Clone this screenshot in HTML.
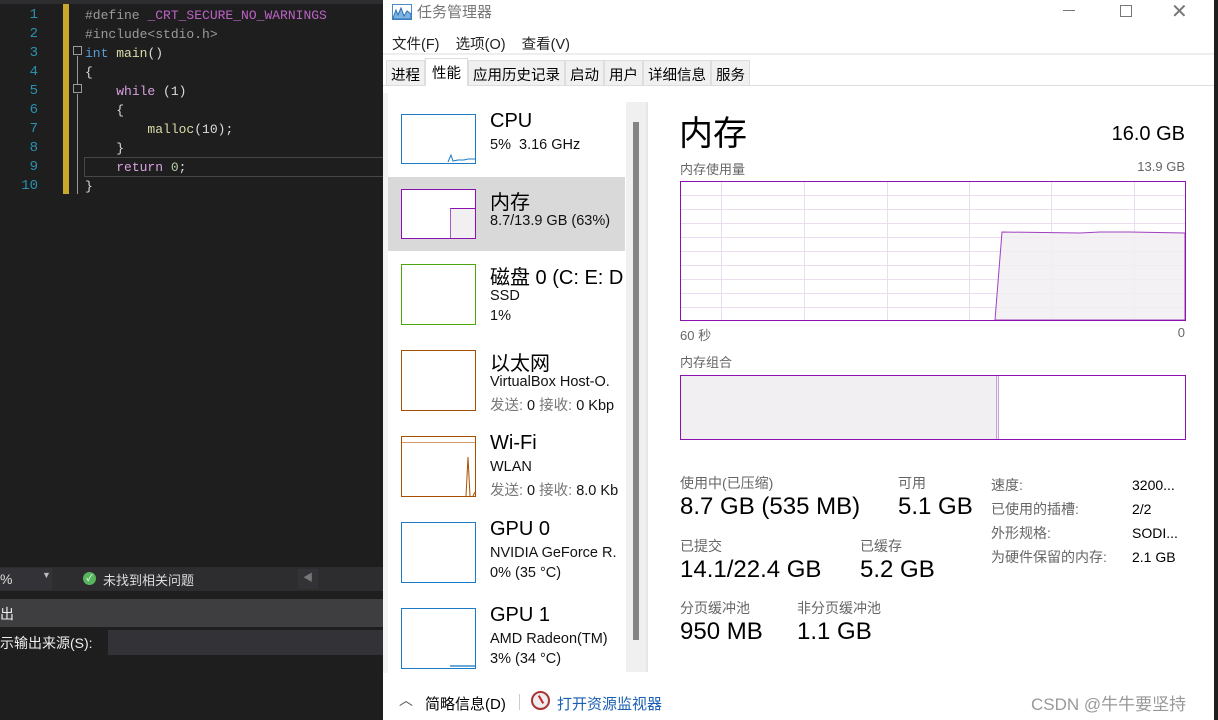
<!DOCTYPE html>
<html><head><meta charset="utf-8"><style>
*{margin:0;padding:0;box-sizing:border-box}
body{width:1218px;height:720px;overflow:hidden;background:#1e1e1e;position:relative;font-family:"Liberation Sans","Noto Sans CJK SC",sans-serif}
.a{position:absolute;white-space:nowrap}
.code{font-family:"Liberation Mono","Noto Sans CJK SC",monospace;font-size:13px;color:#dcdcdc}
.ln{color:#2b91af;font-family:"Liberation Mono",monospace;font-size:14px;width:38px;text-align:right}
.tm{position:absolute;left:383px;top:0;width:831px;height:720px;background:#fff}
.th{position:absolute;left:18px;width:75px;background:#fff}
.t1{font-size:20px;color:#000}
.t2{font-size:14.5px;color:#111}
.g{color:#777}
.lab{font-size:14px;color:#666}
.val{font-size:24px;color:#000}
</style></head><body>
<!-- VS editor -->
<div class="a" style="left:63px;top:4px;width:6px;height:190px;background:#c8a82a"></div>
<div class="a" style="left:0;top:0;width:383px;height:4px;background:#2d2d30"></div>
<div class="a" style="left:84px;top:157px;width:299px;height:20px;border:1px solid #464646;border-right:none"></div>
<div class="a ln" style="left:0;top:6px;line-height:19px">1<br>2<br>3<br>4<br>5<br>6<br>7<br>8<br>9<br>10</div>
<div class="a" style="left:73px;top:46px;width:9px;height:9px;border:1px solid #999"></div>
<div class="a" style="left:73px;top:84px;width:9px;height:9px;border:1px solid #999"></div>
<div class="a" style="left:77px;top:56px;width:1px;height:28px;background:#999"></div>
<div class="a" style="left:77px;top:94px;width:1px;height:100px;background:#999"></div>
<div class="a code" style="left:85px;top:6px;line-height:19px">
<span style="color:#9b9b9b">#define</span> <span style="color:#bd63c5">_CRT_SECURE_NO_WARNINGS</span><br>
<span style="color:#9b9b9b">#include&lt;stdio.h&gt;</span><br>
<span style="color:#569cd6">int</span> <span style="color:#dcdcaa">main</span>()<br>
{<br>
&nbsp;&nbsp;&nbsp;&nbsp;<span style="color:#d8a0df">while</span> (1)<br>
&nbsp;&nbsp;&nbsp;&nbsp;{<br>
&nbsp;&nbsp;&nbsp;&nbsp;&nbsp;&nbsp;&nbsp;&nbsp;<span style="color:#dcdcaa">malloc</span>(10);<br>
&nbsp;&nbsp;&nbsp;&nbsp;}<br>
&nbsp;&nbsp;&nbsp;&nbsp;<span style="color:#d8a0df">return</span> <span style="color:#b5cea8">0</span>;<br>
}</div>
<!-- status -->
<div class="a" style="left:0;top:567px;width:383px;height:24px;background:#2d2d30"></div>
<div class="a" style="left:0;top:568px;width:52px;height:22px;background:#333337;color:#ddd;font-size:14px;padding:3px 0">%<span style="position:absolute;left:42px;top:2px;font-size:9px;color:#bbb">▼</span></div>
<div class="a" style="left:83px;top:572px;width:13px;height:13px;border-radius:50%;background:#57b55d;color:#fff;font-size:9px;text-align:center;line-height:13px">✓</div>
<div class="a" style="left:103px;top:570px;color:#ddd;font-size:13px">未找到相关问题</div>
<div class="a" style="left:298px;top:569px;width:20px;height:20px;background:#333337;color:#777;font-size:10px;text-align:center;line-height:20px">◀</div>
<div class="a" style="left:0;top:599px;width:383px;height:28px;background:#3e3e40;color:#eee;font-size:14px;padding-top:5px">出</div>
<div class="a" style="left:0;top:633px;color:#eee;font-size:14px">示输出来源(S):</div>
<div class="a" style="left:108px;top:630px;width:275px;height:25px;background:#333337"></div>
<!-- Task manager -->
<div class="tm">
 <svg class="a" style="left:9px;top:4px" width="20" height="16" viewBox="0 0 20 16"><rect x="0.5" y="0.5" width="19" height="15" fill="#fff" stroke="#4a8ac8"/><path d="M1 14 L4 6 L6 11 L9 4 L12 12 L15 7 L19 10 L19 15 L1 15Z" fill="#7fb3e0" stroke="#2a6fb5"/></svg>
 <div class="a" style="left:34px;top:1px;font-size:15px;color:#777">任务管理器</div>
 <div class="a" style="left:680px;top:10px;width:12px;height:1px;background:#777"></div>
 <div class="a" style="left:737px;top:5px;width:12px;height:12px;border:1px solid #777"></div>
 <div class="a" style="left:788px;top:-1px;font-size:20px;color:#777">✕</div>
 <div class="a" style="left:9px;top:33px;font-size:14.5px;color:#222">文件(F)&nbsp;&nbsp;&nbsp; 选项(O)&nbsp;&nbsp;&nbsp; 查看(V)</div>
 <div class="a" style="left:0;top:53px;width:831px;height:2px;background:#eee"></div>
 <div class="a" style="left:0;top:85px;width:831px;height:1px;background:#ddd"></div>
 <div class="a" style="left:3px;top:60px;height:26px;font-size:14.5px;color:#000;display:flex">
  <div style="background:#f0f0f0;border:1px solid #ddd;padding:3px 4px">进程</div>
  <div style="background:#fff;border:1px solid #ddd;border-bottom:none;padding:3px 6px;margin-top:-2px;height:28px">性能</div>
  <div style="background:#f0f0f0;border:1px solid #ddd;padding:3px 4px">应用历史记录</div>
  <div style="background:#f0f0f0;border:1px solid #ddd;padding:3px 4px">启动</div>
  <div style="background:#f0f0f0;border:1px solid #ddd;padding:3px 4px">用户</div>
  <div style="background:#f0f0f0;border:1px solid #ddd;padding:3px 4px">详细信息</div>
  <div style="background:#f0f0f0;border:1px solid #ddd;padding:3px 4px">服务</div>
 </div>
 <div class="a" style="left:0;top:93px;width:5px;height:580px;background:#f4f4f4"></div>
 <div class="a" style="left:5px;top:177px;width:237px;height:74px;background:#d9d9d9"></div>
 <div class="a" style="left:243px;top:102px;width:20px;height:570px;background:#f0f0f0"></div>
 <div class="a" style="left:250px;top:122px;width:6px;height:518px;background:#858585"></div>
 <div class="a" style="left:263px;top:102px;width:2px;height:570px;background:#e6e6e6"></div>

 <div class="a" style="left:0;top:100px;width:242px;height:580px;overflow:hidden">
 <div class="th a" style="top:14px;height:50px;border:1px solid #1c7bc4"><svg width="73" height="48" style="position:absolute;left:0;top:0"><path d="M46 47 L49 40 L51 46 L56 45 L62 45 L66 44 L73 44" fill="none" stroke="#1c7bc4"/></svg></div>
 <div class="a t1" style="left:107px;top:10px">CPU</div>
 <div class="a t2" style="left:107px;top:37px">5%&nbsp; 3.16 GHz</div>

 <div class="th a" style="top:89px;height:50px;border:1px solid #8b12ae"><div style="position:absolute;left:48px;top:18px;width:25px;height:30px;background:#f1eff2;border-left:1px solid #a45cc1;border-top:1px solid #8b12ae"></div></div>
 <div class="a t1" style="left:107px;top:86px">内存</div>
 <div class="a t2" style="left:107px;top:113px">8.7/13.9 GB (63%)</div>

 <div class="th a" style="top:164px;height:61px;border:1px solid #4da60c"></div>
 <div class="a t1" style="left:107px;top:161px">磁盘 0 (C: E: D:</div>
 <div class="a t2" style="left:107px;top:188px">SSD</div>
 <div class="a t2" style="left:107px;top:208px">1%</div>

 <div class="th a" style="top:250px;height:61px;border:1px solid #a74f01"></div>
 <div class="a t1" style="left:107px;top:247px">以太网</div>
 <div class="a t2" style="left:107px;top:274px">VirtualBox Host-O.</div>
 <div class="a t2" style="left:107px;top:294px"><span class="g">发送:</span> 0 <span class="g">接收:</span> 0 Kbp</div>

 <div class="th a" style="top:336px;height:61px;border:1px solid #a74f01"><svg width="73" height="59" style="position:absolute;left:0;top:0"><path d="M0 5.5 H73" stroke="#d49a6a"/><path d="M64 59 L66 20 L68 59 M71 59 L73 55" fill="none" stroke="#a74f01"/></svg></div>
 <div class="a t1" style="left:107px;top:332px">Wi-Fi</div>
 <div class="a t2" style="left:107px;top:359px">WLAN</div>
 <div class="a t2" style="left:107px;top:379px"><span class="g">发送:</span> 0 <span class="g">接收:</span> 8.0 Kb</div>

 <div class="th a" style="top:422px;height:61px;border:1px solid #1c7bc4"></div>
 <div class="a t1" style="left:107px;top:418px">GPU 0</div>
 <div class="a t2" style="left:107px;top:445px">NVIDIA GeForce R.</div>
 <div class="a t2" style="left:107px;top:465px">0% (35 °C)</div>

 <div class="th a" style="top:508px;height:61px;border:1px solid #1c7bc4"><div style="position:absolute;left:48px;top:56px;width:25px;height:2px;background:#6aa9dc"></div></div>
 <div class="a t1" style="left:107px;top:504px">GPU 1</div>
 <div class="a t2" style="left:107px;top:531px">AMD Radeon(TM)</div>
 <div class="a t2" style="left:107px;top:551px">3% (34 °C)</div>
 </div>

 <!-- right -->
 <div class="a" style="left:296px;top:106px;font-size:34px;color:#000">内存</div>
 <div class="a" style="right:29px;top:123px;font-size:20px;color:#000">16.0 GB</div>
 <div class="a lab" style="left:297px;top:159px;font-size:13px">内存使用量</div>
 <div class="a lab" style="right:29px;top:159px;font-size:13px">13.9 GB</div>
 <svg class="a" style="left:297px;top:181px" width="506" height="140">
  <g stroke="#ecdcf2" stroke-width="1">
   <path d="M41.5 0V140M124.5 0V140M207.5 0V140M289.5 0V140M371.5 0V140M454.5 0V140"/>
   <path d="M0 14.5H506M0 28.5H506M0 42.5H506M0 56.5H506M0 70.5H506M0 84.5H506M0 98.5H506M0 112.5H506M0 126.5H506"/>
  </g>
  <path d="M315 139 L322 51 L400 52 L420 51 L450 51 L505 52 L505 139Z" fill="#f1eff2" fill-opacity=".85" stroke="#a040c0" stroke-width="1"/>
  <rect x="0.5" y="0.5" width="505" height="139" fill="none" stroke="#8b12ae"/>
 </svg>
 <div class="a lab" style="left:297px;top:325px;font-size:13px">60 秒</div>
 <div class="a lab" style="right:29px;top:325px;font-size:13px">0</div>
 <div class="a lab" style="left:297px;top:352px;font-size:13px">内存组合</div>
 <div class="a" style="left:297px;top:375px;width:506px;height:65px;border:1px solid #8b12ae;background:#fff">
  <div style="position:absolute;left:0;top:0;width:318px;height:63px;background:#f1eff2;border-right:3px double #c9a0d8"></div>
 </div>
 <div class="a lab" style="left:297px;top:473px">使用中(已压缩)</div>
 <div class="a val" style="left:297px;top:493px">8.7 GB (535 MB)</div>
 <div class="a lab" style="left:515px;top:473px">可用</div>
 <div class="a val" style="left:515px;top:493px">5.1 GB</div>
 <div class="a lab" style="left:297px;top:536px">已提交</div>
 <div class="a val" style="left:297px;top:556px">14.1/22.4 GB</div>
 <div class="a lab" style="left:477px;top:536px">已缓存</div>
 <div class="a val" style="left:477px;top:556px">5.2 GB</div>
 <div class="a lab" style="left:297px;top:598px">分页缓冲池</div>
 <div class="a val" style="left:297px;top:618px">950 MB</div>
 <div class="a lab" style="left:414px;top:598px">非分页缓冲池</div>
 <div class="a val" style="left:414px;top:618px">1.1 GB</div>
 <div class="a lab" style="left:608px;top:473px;line-height:24px">速度:<br>已使用的插槽:<br>外形规格:<br>为硬件保留的内存:</div>
 <div class="a" style="left:749px;top:473px;line-height:24px;font-size:14px;color:#000">3200...<br>2/2<br>SODI...<br>2.1 GB</div>
 <!-- footer -->
 <div class="a" style="left:16px;top:690px;font-size:14px;color:#555">︿</div>
 <div class="a" style="left:42px;top:693px;font-size:15px;color:#000">简略信息(D)</div>
 <div class="a" style="left:136px;top:694px;width:1px;height:16px;background:#ccc"></div>
 <div class="a" style="left:148px;top:691px;width:19px;height:19px;border-radius:50%;border:2px solid #a33;background:#eee"><div style="position:absolute;left:7px;top:2px;width:2px;height:9px;background:#c22;transform:rotate(-30deg)"></div></div>
 <div class="a" style="left:174px;top:693px;font-size:15px;color:#1a5fb4">打开资源监视器</div>
 <div class="a" style="left:648px;top:690px;font-size:17px;color:#999">CSDN @牛牛要坚持</div>
</div>
<div class="a" style="left:1214px;top:0;width:4px;height:720px;background:#1e1e1e"></div>
</body></html>
